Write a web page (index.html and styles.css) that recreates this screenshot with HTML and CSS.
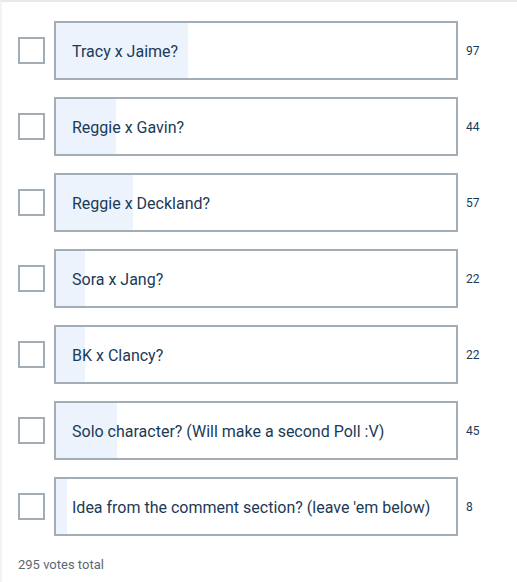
FILE: index.html
```html
<!DOCTYPE html>
<html lang="en">

<head>
    <meta charset="UTF-8">
    <meta name="viewport" content="width=device-width, initial-scale=1.0">
    <title>Poll</title>
    <link rel="stylesheet" href="styles.css">
</head>

<body>

    <!-- poll -->
    <div class="poll">
        <ul class="answers">
            <li class="answer">
                <span class="check"></span>
                <span class="option">
                    <span class="fill" style="width: 32.9%"></span>
                    <span class="label">Tracy x Jaime?</span>
                </span>
                <span class="count">97</span>
            </li>
            <li class="answer">
                <span class="check"></span>
                <span class="option">
                    <span class="fill" style="width: 14.9%"></span>
                    <span class="label">Reggie x Gavin?</span>
                </span>
                <span class="count">44</span>
            </li>
            <li class="answer">
                <span class="check"></span>
                <span class="option">
                    <span class="fill" style="width: 19.3%"></span>
                    <span class="label">Reggie x Deckland?</span>
                </span>
                <span class="count">57</span>
            </li>
            <li class="answer">
                <span class="check"></span>
                <span class="option">
                    <span class="fill" style="width: 7.2%"></span>
                    <span class="label">Sora x Jang?</span>
                </span>
                <span class="count">22</span>
            </li>
            <li class="answer">
                <span class="check"></span>
                <span class="option">
                    <span class="fill" style="width: 7.2%"></span>
                    <span class="label">BK x Clancy?</span>
                </span>
                <span class="count">22</span>
            </li>
            <li class="answer">
                <span class="check"></span>
                <span class="option">
                    <span class="fill" style="width: 15.3%"></span>
                    <span class="label">Solo character? (Will make a second Poll :V)</span>
                </span>
                <span class="count">45</span>
            </li>
            <li class="answer">
                <span class="check"></span>
                <span class="option">
                    <span class="fill" style="width: 2.7%"></span>
                    <span class="label">Idea from the comment section? (leave 'em below)</span>
                </span>
                <span class="count">8</span>
            </li>
        </ul>

        <p class="total">295 votes total</p>
    </div>

</body>

</html>
```

FILE: styles.css
```css
* {
    margin: 0;
    padding: 0;
    box-sizing: border-box;
}

body {
    font-family: Roboto, "Liberation Sans", Arial, sans-serif;
    color: #1b3a57;
    background-color: #fff;
}

/* whole poll */
.poll {
    width: 517px;
    height: 582px;
    border-top: 2px solid #e5e9ec;
    border-left: 2px solid #f1f3f5;
    padding: 19px 0 0 16px;
}

.answers {
    list-style: none;
    display: flex;
    flex-direction: column;
    gap: 17px;
}

.answer {
    display: flex;
    align-items: center;
}

/* checkbox */
.check {
    width: 27px;
    height: 27px;
    border: 2px solid #a3adb5;
    margin-right: 9px;
}

/* option box */
.option {
    position: relative;
    width: 404px;
    height: 59px;
    border: 2px solid #a3adb5;
    display: flex;
    align-items: center;
    padding: 2px 0 0 16px;
}

.fill {
    position: absolute;
    top: 0;
    left: 0;
    bottom: 0;
    background-color: #ecf3fd;
}

.label {
    position: relative;
    font-size: 16px;
}

.count {
    margin-left: 8px;
    font-size: 12px;
}

.total {
    margin-top: 21px;
    font-size: 13px;
    color: #5b6875;
}
```
